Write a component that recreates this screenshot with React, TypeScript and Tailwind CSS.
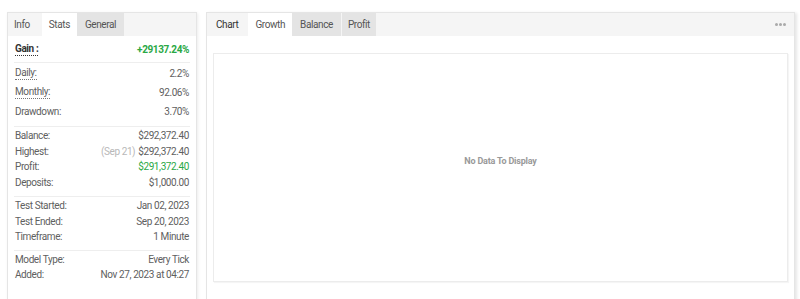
import React from "react";

type Row = { label: string; value: React.ReactNode; dotted?: boolean; green?: boolean };

const groups: { rows: Row[]; h: string; pb: string }[] = [
  {
    h: "h-[19px]",
    pb: "pb-[5px]",
    rows: [
      { label: "Daily:", value: "2.2%", dotted: true },
      { label: "Monthly:", value: "92.06%", dotted: true },
      { label: "Drawdown:", value: "3.70%" },
    ],
  },
  {
    h: "h-[15.5px]",
    pb: "pb-[6px]",
    rows: [
      { label: "Balance:", value: "$292,372.40" },
      {
        label: "Highest:",
        value: (
          <>
            <span className="mr-[3px] text-[#b8b8b8]">(Sep 21)</span>$292,372.40
          </>
        ),
      },
      { label: "Profit:", value: "$291,372.40", green: true },
      { label: "Deposits:", value: "$1,000.00" },
    ],
  },
  {
    h: "h-[15.5px]",
    pb: "pb-[5px]",
    rows: [
      { label: "Test Started:", value: "Jan 02, 2023" },
      { label: "Test Ended:", value: "Sep 20, 2023" },
      { label: "Timeframe:", value: "1 Minute" },
    ],
  },
  {
    h: "h-[15.5px]",
    pb: "pb-[5px]",
    rows: [
      { label: "Model Type:", value: "Every Tick" },
      { label: "Added:", value: "Nov 27, 2023 at 04:27" },
    ],
  },
];

const StatsPanel = () => (
  <div className="flex w-[190px] shrink-0 flex-col border border-[#e5e5e5] bg-white shadow-[1px_1px_3px_rgba(0,0,0,0.08)]">
    {/* tabs */}
    <div className="flex h-[23px] items-stretch bg-[#f5f5f5] text-[#555]">
      <div className="flex items-center pl-[6px] pr-[12px]">Info</div>
      <div className="flex items-center bg-white px-[7px]">Stats</div>
      <div className="flex items-center bg-[#e4e4e4] px-[8px]">General</div>
    </div>
    <div className="px-[6px]">
      <div className="flex h-[27px] items-center justify-between border-b border-[#eee] px-[1px]">
        <span className="border-b border-dotted border-[#333] font-bold leading-[12px] text-[#333]">Gain :</span>
        <span className="font-bold text-[#2aa845]">+29137.24%</span>
      </div>
      {groups.map((g, i) => (
        <div
          key={i}
          className={`flex flex-col pt-[1px] ${g.pb} ${i < groups.length - 1 ? "border-b border-[#eee]" : ""}`}
        >
          {g.rows.map((r) => (
            <div key={r.label} className={`flex items-center justify-between px-[1px] ${g.h}`}>
              <span className={r.dotted ? "border-b border-dotted border-[#777] leading-[12px]" : ""}>
                {r.label}
              </span>
              <span className={r.green ? "text-[#2aa845]" : ""}>{r.value}</span>
            </div>
          ))}
        </div>
      ))}
    </div>
  </div>
);

const ChartPanel = () => (
  <div className="flex flex-1 flex-col border border-[#e5e5e5] bg-white shadow-[2px_1px_3px_rgba(0,0,0,0.1)]">
    <div className="flex h-[23px] items-stretch bg-[#f5f5f5] text-[#555]">
      <div className="flex items-center pl-[9px] pr-[10px] text-[#333]">Chart</div>
      <div className="flex items-center bg-white px-[7px]">Growth</div>
      <div className="flex items-center bg-[#e4e4e4] px-[8px]">Balance</div>
      <div className="ml-[1px] flex items-center bg-[#e4e4e4] px-[6px]">Profit</div>
      <div className="ml-auto flex items-center gap-[1px] pr-[8px]">
        <span className="h-[3px] w-[3px] rounded-full bg-[#aaa]" />
        <span className="h-[3px] w-[3px] rounded-full bg-[#aaa]" />
        <span className="h-[3px] w-[3px] rounded-full bg-[#aaa]" />
      </div>
    </div>
    <div className="px-[6px] pt-[17px] pb-[40px]">
      <div className="flex h-[229px] items-center justify-center border border-[#ececec] pb-[12px] shadow-[1px_1px_1px_rgba(0,0,0,0.04)]">
        <span className="text-[9px] font-bold tracking-[-0.2px] text-[#999]">No Data To Display</span>
      </div>
    </div>
  </div>
);

export default function App() {
  return (
    <div className="h-[299px] w-[800px] overflow-hidden bg-white font-['Roboto','Liberation_Sans',sans-serif] text-[10px] tracking-[-0.4px] text-[#606060]">
      <div className="flex gap-[9px] pt-[12px] pl-[7px] pr-[5px]">
        <StatsPanel />
        <ChartPanel />
      </div>
    </div>
  );
}
